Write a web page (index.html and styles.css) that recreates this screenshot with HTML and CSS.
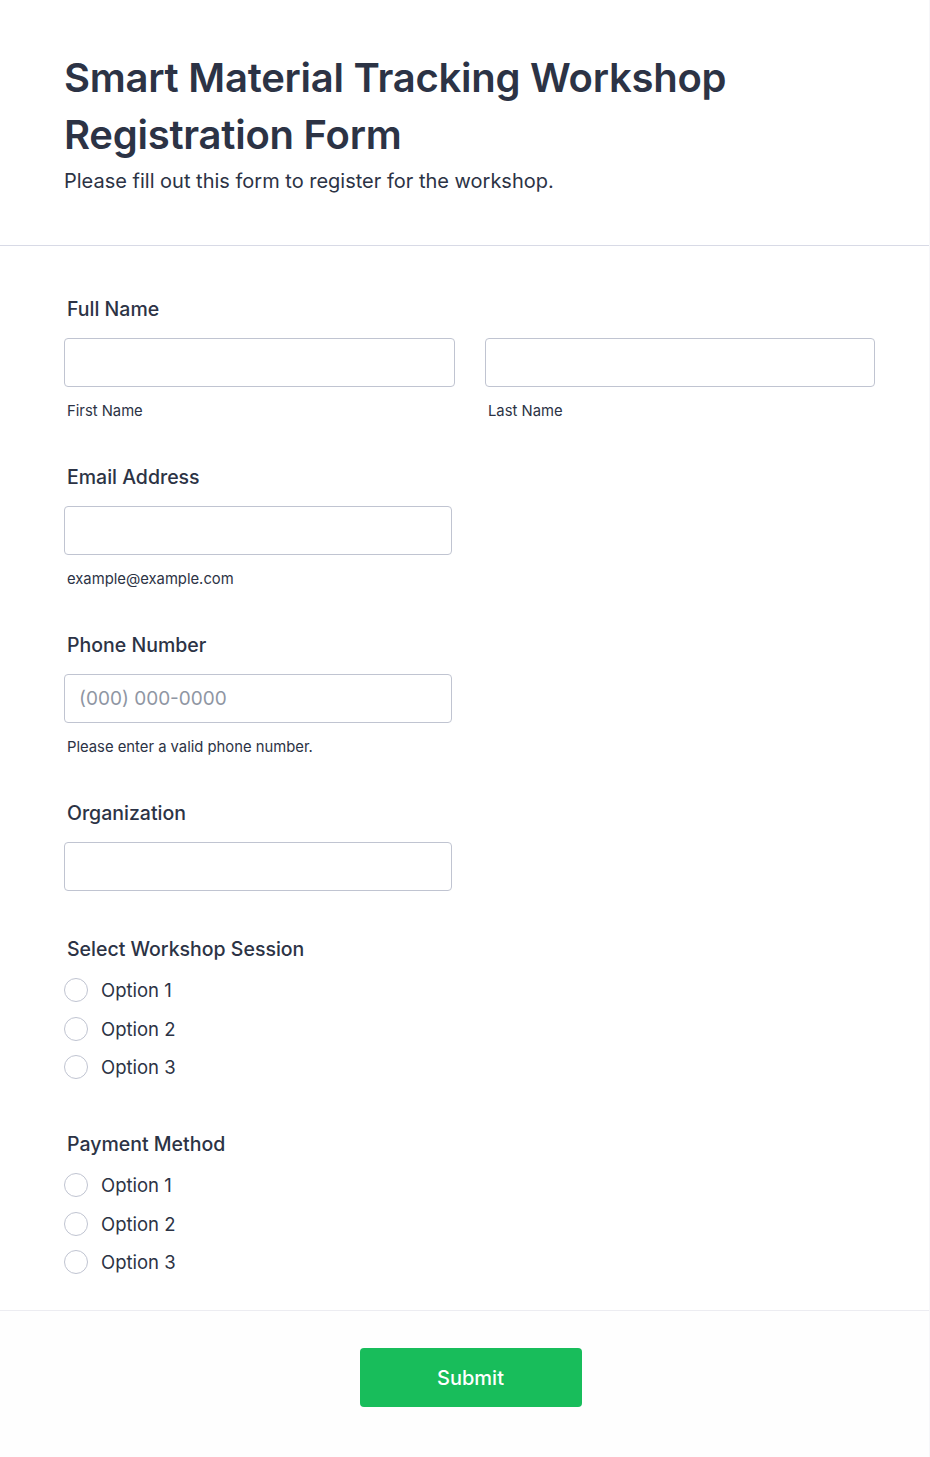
FILE: index.html
```html
<!DOCTYPE html>
<html lang="en">
<head>
<meta charset="utf-8">
<title>Smart Material Tracking Workshop Registration Form</title>
<link rel="stylesheet" href="styles.css">
</head>
<body>
<div class="card">
  <header class="form-header">
    <h1 class="title">Smart Material Tracking Workshop Registration Form</h1>
    <p class="subtitle">Please fill out this form to register for the workshop.</p>
  </header>
  <form class="form-body">
    <div class="field">
      <div class="label">Full Name</div>
      <div class="name-row">
        <div class="name-col">
          <input class="input" type="text">
          <div class="sublabel">First Name</div>
        </div>
        <div class="name-col">
          <input class="input" type="text">
          <div class="sublabel">Last Name</div>
        </div>
      </div>
    </div>
    <div class="field">
      <div class="label">Email Address</div>
      <input class="input input-single" type="email">
      <div class="sublabel">example@example.com</div>
    </div>
    <div class="field">
      <div class="label">Phone Number</div>
      <input class="input input-single" type="tel" placeholder="(000) 000-0000">
      <div class="sublabel">Please enter a valid phone number.</div>
    </div>
    <div class="field field-nosub">
      <div class="label">Organization</div>
      <input class="input input-single" type="text">
    </div>
    <div class="field field-radio">
      <div class="label label-radio">Select Workshop Session</div>
      <label class="option"><span class="radio"></span><span class="option-text">Option 1</span></label>
      <label class="option"><span class="radio"></span><span class="option-text">Option 2</span></label>
      <label class="option"><span class="radio"></span><span class="option-text">Option 3</span></label>
    </div>
    <div class="field field-radio field-last">
      <div class="label label-radio">Payment Method</div>
      <label class="option"><span class="radio"></span><span class="option-text">Option 1</span></label>
      <label class="option"><span class="radio"></span><span class="option-text">Option 2</span></label>
      <label class="option"><span class="radio"></span><span class="option-text">Option 3</span></label>
    </div>
  </form>
  <footer class="form-footer">
    <button class="submit" type="button">Submit</button>
  </footer>
</div>
</body>
</html>
```
FILE: styles.css
```css
* { box-sizing: border-box; }
html, body { margin: 0; padding: 0; background: #ffffff; }
body {
  font-family: Inter, "Noto Sans", "Liberation Sans", sans-serif;
  color: #2c3345;
}
.card {
  width: 930px;
  min-height: 1457px;
  border-right: 1px solid #f6f6f9;
  display: flex;
  flex-direction: column;
}
.form-header {
  padding: 49px 64px 52px 64px;
  border-bottom: 1px solid #d8dae6;
}
.title {
  margin: 0;
  font-size: 40px;
  line-height: 57px;
  font-weight: 600;
  letter-spacing: -0.25px;
  color: #2c3345;
}
.subtitle {
  margin: 6px 0 0 0;
  font-size: 20px;
  line-height: 24px;
  color: #2c3345;
}
.form-body {
  padding: 51px 50px 28.5px 64px;
}
.field { margin-bottom: 45px; }
.field-nosub { margin-bottom: 46px; }
.field-radio { margin-bottom: 45.5px; }
.field-last { margin-bottom: 0; }
.label {
  font-size: 19.5px;
  line-height: 24px;
  font-weight: 500;
  padding-left: 3px;
  margin-bottom: 17px;
}
.label-radio { margin-bottom: 10px; }
.name-row {
  display: flex;
  gap: 30px;
}
.name-col { width: 391px; flex: none; }
.name-col + .name-col { width: 390px; }
.input {
  display: block;
  width: 100%;
  height: 49px;
  border: 1px solid #c0c4d1;
  border-radius: 4px;
  background: #fff;
  padding: 0 14px;
  font-family: inherit;
  font-size: 19px;
  color: #2c3345;
  outline: none;
}
.input-single { width: 388px; }
.input::placeholder { color: #8f96a3; }
.sublabel {
  font-size: 14.8px;
  line-height: 18px;
  margin-top: 15px;
  padding-left: 3px;
  color: #2c3345;
}
.field-radio .option {
  display: flex;
  align-items: center;
  height: 38.5px;
}
.radio {
  width: 24px;
  height: 24px;
  border: 1px solid #c0c4d1;
  border-radius: 50%;
  background: #fff;
  flex: none;
}
.option-text {
  margin-left: 13px;
  font-size: 18.5px;
  line-height: 24px;
}
.form-footer {
  flex: 1;
  border-top: 1px solid #ececf1;
  background: #fefefe;
  padding: 37px 0 50px 12px;
  display: flex;
  justify-content: center;
  align-items: flex-start;
}
.submit {
  width: 222px;
  height: 59px;
  border: none;
  border-radius: 4px;
  background: #18bd5b;
  color: #ffffff;
  font-family: inherit;
  font-size: 20px;
  font-weight: 500;
  cursor: pointer;
}
```
